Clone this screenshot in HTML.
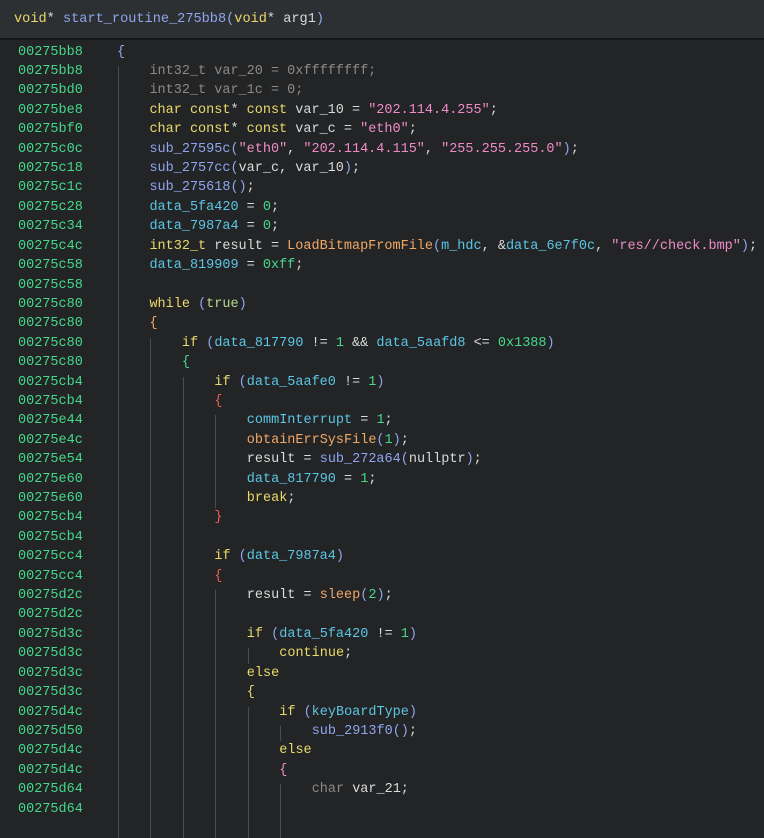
<!DOCTYPE html>
<html><head><meta charset="utf-8"><style>
html,body{margin:0;padding:0;width:764px;height:815px;overflow:hidden;background:#222426;}
#hd{position:absolute;left:0;top:0;width:764px;height:38px;background:#2d3033;border-bottom:2px solid #131516;font:13.6px "Liberation Mono",monospace;color:#d8d8d8;line-height:38px;}
#hd pre{margin:0;position:absolute;left:14px;top:1px;font:inherit;}
.l{position:absolute;left:0;height:19.42px;line-height:19.42px;font:13.5px "Liberation Mono",monospace;white-space:pre;color:#dadada;}
.a{position:absolute;left:18px;color:#45d98a}
.c{position:absolute;left:117px}
.g{position:absolute;width:1px;background:#4a4d50}
.k{color:#ead96a}.v{color:#5cc6e4}.f{color:#8fa6ee}.i{color:#f0a867}.n{color:#46d98c}.s{color:#ef8cc8}.d{color:#8e8984}.t{color:#b8d890}
.bb{color:#8fa6ee}.bo{color:#f0a867}.bg{color:#46d98c}.br{color:#ef5a5a}.by{color:#ead96a}.bp{color:#ef8cc8}
</style></head><body>
<div id="hd"><pre><span class="k">void</span>* <span class="f">start_routine_275bb8(</span><span class="k">void</span>* arg1<span class="f">)</span></pre></div>
<div id="code"></div>
<script>
var L=[
["00275bb8",0,'<span class="bb">{</span>'],
["00275bb8",1,'<span class="d">int32_t var_20 = 0xffffffff;</span>'],
["00275bd0",1,'<span class="d">int32_t var_1c = 0;</span>'],
["00275be8",1,'<span class="k">char const</span>* <span class="k">const</span> var_10 = <span class="s">"202.114.4.255"</span>;'],
["00275bf0",1,'<span class="k">char const</span>* <span class="k">const</span> var_c = <span class="s">"eth0"</span>;'],
["00275c0c",1,'<span class="f">sub_27595c(</span><span class="s">"eth0"</span>, <span class="s">"202.114.4.115"</span>, <span class="s">"255.255.255.0"</span><span class="f">)</span>;'],
["00275c18",1,'<span class="f">sub_2757cc(</span>var_c, var_10<span class="f">)</span>;'],
["00275c1c",1,'<span class="f">sub_275618()</span>;'],
["00275c28",1,'<span class="v">data_5fa420</span> = <span class="n">0</span>;'],
["00275c34",1,'<span class="v">data_7987a4</span> = <span class="n">0</span>;'],
["00275c4c",1,'<span class="k">int32_t</span> result = <span class="i">LoadBitmapFromFile</span><span class="f">(</span><span class="v">m_hdc</span>, &amp;<span class="v">data_6e7f0c</span>, <span class="s">"res//check.bmp"</span><span class="f">)</span>;'],
["00275c58",1,'<span class="v">data_819909</span> = <span class="n">0xff</span>;'],
["00275c58",1,''],
["00275c80",1,'<span class="k">while</span> <span class="f">(</span><span class="t">true</span><span class="f">)</span>'],
["00275c80",1,'<span class="bo">{</span>'],
["00275c80",2,'<span class="k">if</span> <span class="f">(</span><span class="v">data_817790</span> != <span class="n">1</span> &amp;&amp; <span class="v">data_5aafd8</span> &lt;= <span class="n">0x1388</span><span class="f">)</span>'],
["00275c80",2,'<span class="bg">{</span>'],
["00275cb4",3,'<span class="k">if</span> <span class="f">(</span><span class="v">data_5aafe0</span> != <span class="n">1</span><span class="f">)</span>'],
["00275cb4",3,'<span class="br">{</span>'],
["00275e44",4,'<span class="v">commInterrupt</span> = <span class="n">1</span>;'],
["00275e4c",4,'<span class="i">obtainErrSysFile</span><span class="f">(</span><span class="n">1</span><span class="f">)</span>;'],
["00275e54",4,'result = <span class="f">sub_272a64(</span>nullptr<span class="f">)</span>;'],
["00275e60",4,'<span class="v">data_817790</span> = <span class="n">1</span>;'],
["00275e60",4,'<span class="k">break</span>;'],
["00275cb4",3,'<span class="br">}</span>'],
["00275cb4",3,''],
["00275cc4",3,'<span class="k">if</span> <span class="f">(</span><span class="v">data_7987a4</span><span class="f">)</span>'],
["00275cc4",3,'<span class="br">{</span>'],
["00275d2c",4,'result = <span class="i">sleep</span><span class="f">(</span><span class="n">2</span><span class="f">)</span>;'],
["00275d2c",4,''],
["00275d3c",4,'<span class="k">if</span> <span class="f">(</span><span class="v">data_5fa420</span> != <span class="n">1</span><span class="f">)</span>'],
["00275d3c",5,'<span class="k">continue</span>;'],
["00275d3c",4,'<span class="k">else</span>'],
["00275d3c",4,'<span class="by">{</span>'],
["00275d4c",5,'<span class="k">if</span> <span class="f">(</span><span class="v">keyBoardType</span><span class="f">)</span>'],
["00275d50",6,'<span class="f">sub_2913f0()</span>;'],
["00275d4c",5,'<span class="k">else</span>'],
["00275d4c",5,'<span class="bp">{</span>'],
["00275d64",6,'<span class="d">char</span> var_21;'],
["00275d64",6,'']
];
var H=19.41,T=44.6,h='';
L.forEach(function(r,i){
 var y=T+i*H;
 h+='<div class="l" style="top:'+y+'px"><span class="a">'+r[0]+'</span><span class="c" style="left:'+(117+r[1]*32.45)+'px">'+r[2]+'</span></div>';
});
var G=[[118,1,40],[150,15,40],[183,17,40],[215,19,23],[215,28,40],[248,31,31],[248,34,40],[280,35,35],[280,38,40]];
G.forEach(function(g){
 h+='<div class="g" style="left:'+g[0]+'px;top:'+(T+g[1]*H+2)+'px;height:'+((g[2]-g[1]+1)*H-4)+'px"></div>';
});
document.getElementById('code').innerHTML=h;
</script>
</body></html>
